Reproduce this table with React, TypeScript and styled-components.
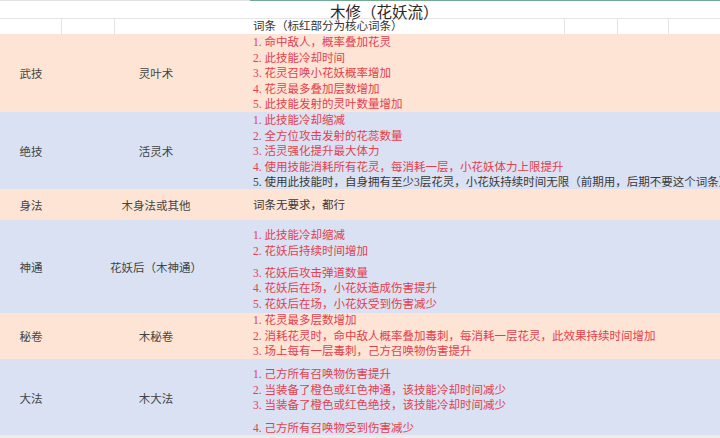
import React from "react";
import styled, { createGlobalStyle } from "styled-components";

const GlobalStyle = createGlobalStyle`
  html, body {
    margin: 0;
    padding: 0;
    background: #ffffff;
  }
  body {
    width: 720px;
    height: 438px;
    overflow: hidden;
    font-family: "Liberation Serif", "Noto Sans CJK SC", serif;
  }
`;

const Sheet = styled.div`
  width: 720px;
  height: 438px;
  display: flex;
  flex-direction: column;
  overflow: hidden;
  background: #efebe7;
`;

const TitleRow = styled.div`
  display: flex;
  height: 19px;
  background: #ffffff;
  border-bottom: 1px solid #e6e6e6;
  box-sizing: border-box;
`;

const TitleLead = styled.div`
  width: 250px;
  border-top: 1px solid #e2e2e2;
`;

const TitleCell = styled.div`
  flex: 1;
  border-top: 1px solid #74a894;
  padding-left: 80px;
  font-family: "Noto Sans CJK SC", sans-serif;
  font-size: 15.5px;
  line-height: 21px;
  color: #2a2a2a;
  white-space: nowrap;
  position: relative;
  z-index: 1;
`;

const HeaderRow = styled.div`
  display: grid;
  grid-template-columns: 62px 53px 135px 315px 53px 51px 1fr;
  height: 15px;
  background: #ffffff;
`;

const HeaderCell = styled.div<{ $line?: boolean }>`
  border-right: ${(p) => (p.$line ? "1px solid #e4e4e4" : "none")};
  padding-left: 3px;
  font-size: 11.5px;
  line-height: 15px;
  color: #333333;
  white-space: nowrap;
`;

const Row = styled.div<{ $tone: "peach" | "blue"; $h: number }>`
  display: grid;
  grid-template-columns: 62px 188px 1fr;
  height: ${(p) => p.$h}px;
  background: ${(p) => (p.$tone === "peach" ? "#fde4d5" : "#d9e1f2")};
`;

const Label = styled.div`
  display: flex;
  align-items: center;
  justify-content: center;
  font-size: 11.5px;
  color: #444444;
  white-space: nowrap;
`;

const Entries = styled.div<{ $pad: number }>`
  display: flex;
  flex-direction: column;
  min-width: 0;
  padding: ${(p) => p.$pad}px 0 0 3px;
`;

const Entry = styled.div<{ $core: boolean; $gap: number }>`
  margin-top: ${(p) => p.$gap}px;
  font-size: 11.5px;
  line-height: 15.5px;
  color: ${(p) => (p.$core ? "#e3404e" : "#3a3a3a")};
  white-space: nowrap;
`;

type Line = { text: string; core?: boolean; gap?: number };

type Section = {
  type: string;
  skill: string;
  tone: "peach" | "blue";
  height: number;
  pad: number;
  lines: Line[];
};

const sections: Section[] = [
  {
    type: "武技",
    skill: "灵叶术",
    tone: "peach",
    height: 78,
    pad: 1,
    lines: [
      { text: "1. 命中敌人，概率叠加花灵", core: true },
      { text: "2. 此技能冷却时间", core: true },
      { text: "3. 花灵召唤小花妖概率增加", core: true },
      { text: "4. 花灵最多叠加层数增加", core: true },
      { text: "5. 此技能发射的灵叶数量增加", core: true },
    ],
  },
  {
    type: "绝技",
    skill: "活灵术",
    tone: "blue",
    height: 77,
    pad: 1,
    lines: [
      { text: "1. 此技能冷却缩减", core: true },
      { text: "2. 全方位攻击发射的花蕊数量", core: true },
      { text: "3. 活灵强化提升最大体力", core: true },
      { text: "4. 使用技能消耗所有花灵，每消耗一层，小花妖体力上限提升", core: true },
      { text: "5. 使用此技能时，自身拥有至少3层花灵，小花妖持续时间无限（前期用，后期不要这个词条）" },
    ],
  },
  {
    type: "身法",
    skill: "木身法或其他",
    tone: "peach",
    height: 31,
    pad: 9,
    lines: [{ text: "词条无要求，都行" }],
  },
  {
    type: "神通",
    skill: "花妖后（木神通）",
    tone: "blue",
    height: 93,
    pad: 8,
    lines: [
      { text: "1. 此技能冷却缩减", core: true },
      { text: "2. 花妖后持续时间增加", core: true },
      { text: "3. 花妖后攻击弹道数量", core: true, gap: 6.5 },
      { text: "4. 花妖后在场，小花妖造成伤害提升", core: true },
      { text: "5. 花妖后在场，小花妖受到伤害减少", core: true },
    ],
  },
  {
    type: "秘卷",
    skill: "木秘卷",
    tone: "peach",
    height: 46,
    pad: 0,
    lines: [
      { text: "1. 花灵最多层数增加", core: true },
      { text: "2. 消耗花灵时，命中敌人概率叠加毒刺，每消耗一层花灵，此效果持续时间增加", core: true },
      { text: "3. 场上每有一层毒刺，己方召唤物伤害提升", core: true },
    ],
  },
  {
    type: "大法",
    skill: "木大法",
    tone: "blue",
    height: 76,
    pad: 8,
    lines: [
      { text: "1. 己方所有召唤物伤害提升", core: true },
      { text: "2. 当装备了橙色或红色神通，该技能冷却时间减少", core: true },
      { text: "3. 当装备了橙色或红色绝技，该技能冷却时间减少", core: true },
      { text: "4. 己方所有召唤物受到伤害减少", core: true, gap: 7.5 },
    ],
  },
];

const headerLines = [true, true, false, true, true, true, false];

const App = () => {
  return (
    <Sheet>
      <GlobalStyle />
      <TitleRow>
        <TitleLead />
        <TitleCell>木修（花妖流）</TitleCell>
      </TitleRow>
      <HeaderRow>
        {headerLines.map((line, i) => (
          <HeaderCell key={i} $line={line}>
            {i === 3 ? "词条（标红部分为核心词条）" : null}
          </HeaderCell>
        ))}
      </HeaderRow>
      {sections.map((s) => (
        <Row key={s.type} $tone={s.tone} $h={s.height}>
          <Label>{s.type}</Label>
          <Label>{s.skill}</Label>
          <Entries $pad={s.pad}>
            {s.lines.map((l) => (
              <Entry key={l.text} $core={!!l.core} $gap={l.gap ?? 0}>
                {l.text}
              </Entry>
            ))}
          </Entries>
        </Row>
      ))}
    </Sheet>
  );
};

export default App;
